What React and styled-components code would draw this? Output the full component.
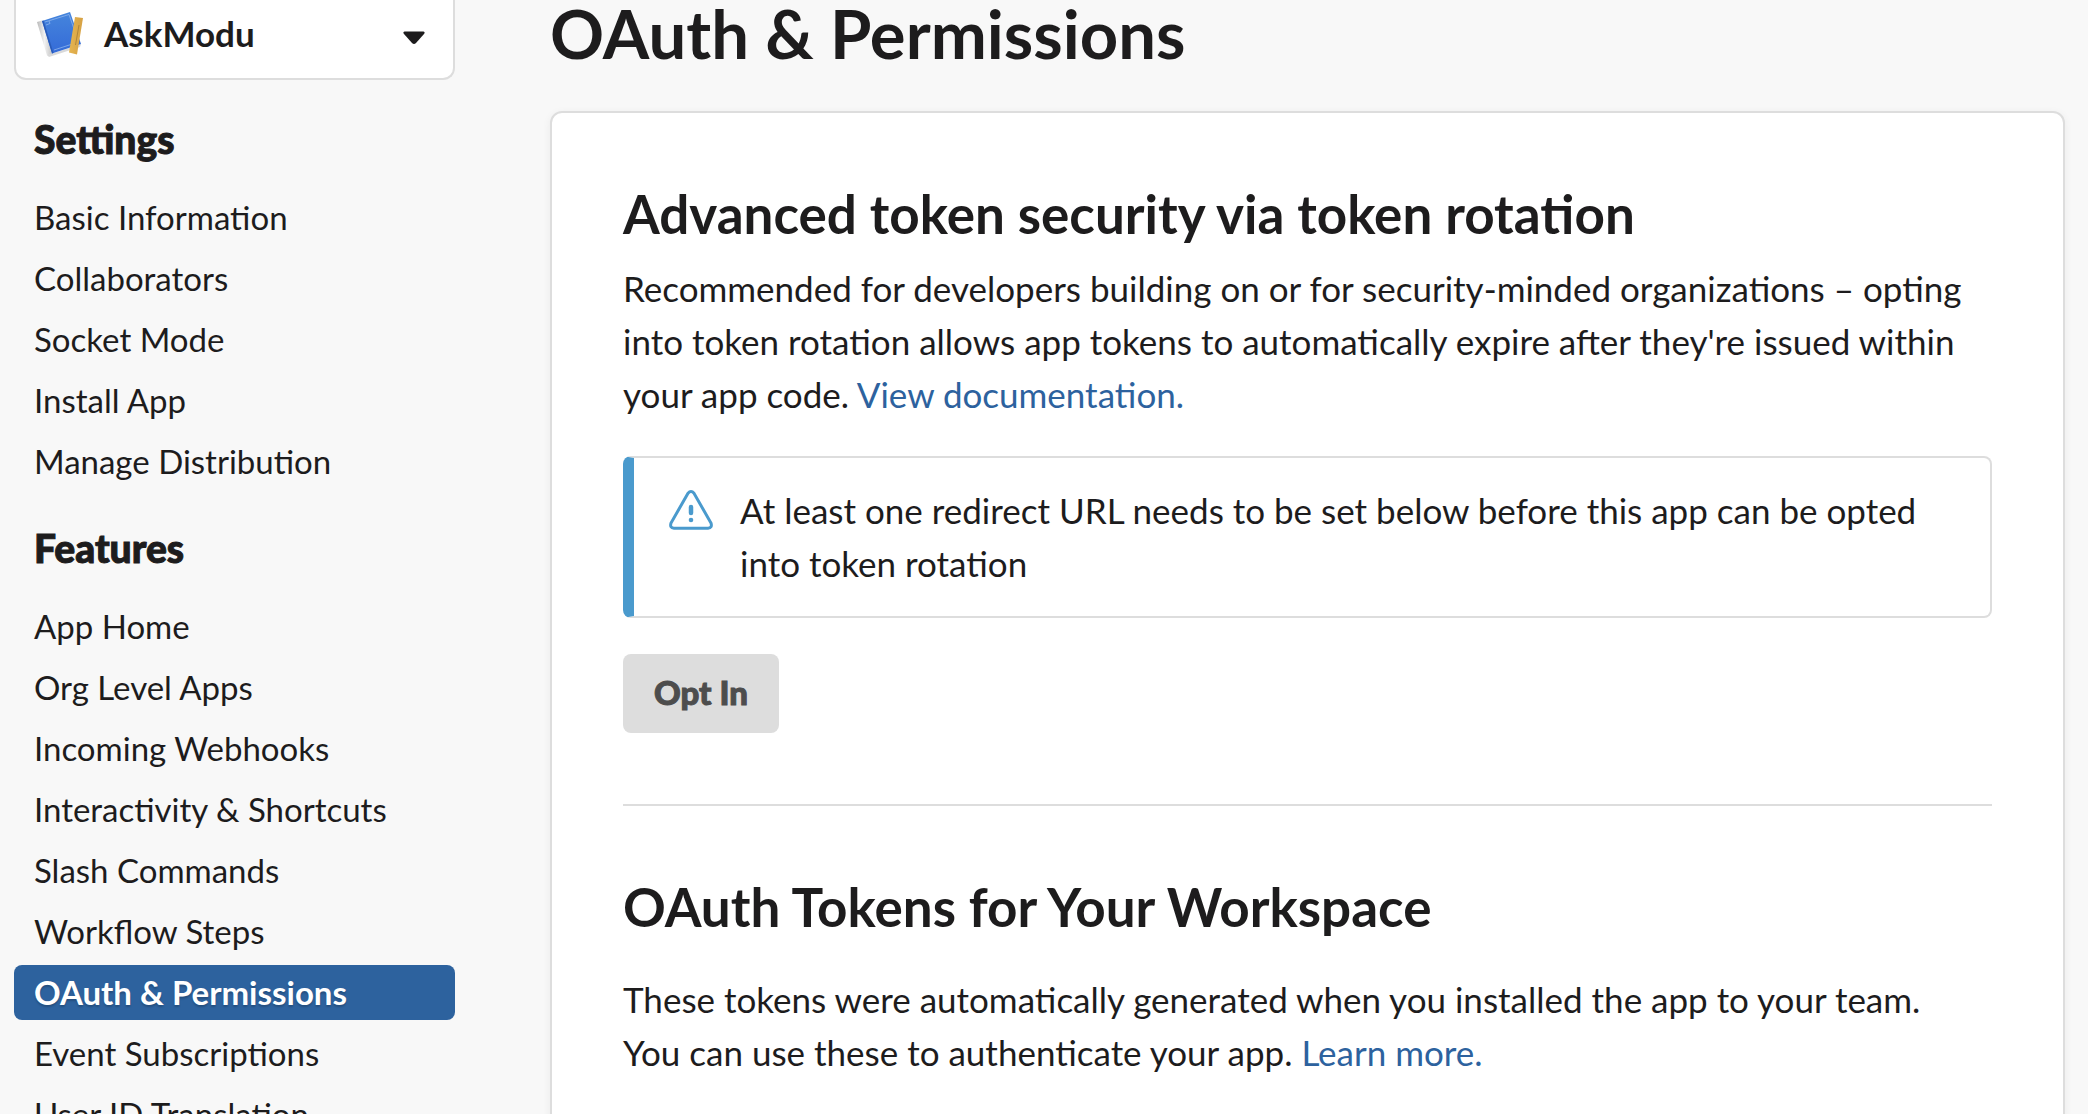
import React from "react";
import styled, { createGlobalStyle } from "styled-components";

const GlobalStyle = createGlobalStyle`
  *, *::before, *::after { box-sizing: border-box; }
  body {
    margin: 0;
    background: #f8f8f8;
    color: #1d1c1d;
    font-family: Lato, "Liberation Sans", sans-serif;
    font-size: 35px;
    line-height: 53px;
  }
`;

const Page = styled.div`
  display: flex;
  gap: 95px;
  height: 100vh;
  padding: 0 23px 0 14px;
  overflow: hidden;
`;

const Sidebar = styled.aside`
  flex: 0 0 441px;
`;

const AppPicker = styled.button`
  display: flex;
  align-items: center;
  gap: 18px;
  width: 100%;
  height: 80px;
  padding: 0 28px 11px 20px;
  border: 2px solid #dddddd;
  border-top: 0;
  border-radius: 0 0 12px 12px;
  background: #ffffff;
  color: inherit;
  font: inherit;
  font-weight: 700;
  text-align: left;
`;

const AppName = styled.span`
  flex: 1;
`;

const CaretIcon = styled.svg`
  flex: none;
  margin-top: 8px;
`;

const NavHeading = styled.h2`
  margin: 0;
  padding: 33px 0 24px 20px;
  font-size: 39px;
  line-height: 53px;
  font-weight: 900;
  -webkit-text-stroke: 1px currentColor;
`;

const NavList = styled.ul`
  display: flex;
  flex-direction: column;
  gap: 6px;
  margin: 0;
  padding: 0;
  list-style: none;
`;

const NavLink = styled.a`
  display: block;
  padding: 0 20px;
  border-radius: 8px;
  font-size: 33px;
  line-height: 55px;
  text-decoration: none;
  white-space: nowrap;
  color: ${(p) => (p.$active ? "#ffffff" : "inherit")};
  background: ${(p) => (p.$active ? "#2d629e" : "transparent")};
  font-weight: ${(p) => (p.$active ? 700 : 400)};
  text-shadow: ${(p) => (p.$active ? "0 2px 2px rgba(0, 0, 0, 0.2)" : "none")};
`;

const Main = styled.main`
  flex: 1;
  min-width: 0;
`;

const Title = styled.h1`
  margin: 0;
  padding: 0 0 45px;
  font-size: 67px;
  line-height: 66px;
  font-weight: 700;
`;

const Card = styled.div`
  min-height: 100vh;
  padding: 71px;
  border: 2px solid #dddddd;
  border-radius: 12px;
  background: #ffffff;
  box-shadow: 0 2px 8px rgba(0, 0, 0, 0.06);
`;

const Section = styled.section`
  & + & {
    margin-top: 71px;
    padding-top: 71px;
    border-top: 2px solid #dddddd;
  }
`;

const SectionTitle = styled.h2`
  margin: 0 0 ${(p) => (p.$spaced ? "36px" : "18px")};
  font-size: 53px;
  line-height: 60px;
  font-weight: 700;
`;

const Text = styled.p`
  margin: 0;
  padding-right: 16px;
`;

const TextLink = styled.a`
  color: #2d629e;
  text-decoration: none;
`;

const Notice = styled.div`
  display: flex;
  gap: 27px;
  margin: 35px 0 36px;
  padding: 26px 40px 26px 35px;
  border: 2px solid #dddddd;
  border-left: 11px solid #4a9acd;
  border-radius: 8px;
`;

const NoticeIcon = styled.svg`
  flex: none;
  margin-top: 6px;
`;

const OptIn = styled.button`
  display: block;
  height: 79px;
  padding: 0 31px 2px;
  border: 0;
  border-radius: 8px;
  background: #dddddd;
  color: #4d4d4d;
  font: inherit;
  font-size: 33px;
  font-weight: 900;
  -webkit-text-stroke: 1px currentColor;
`;

const settings = [
  "Basic Information",
  "Collaborators",
  "Socket Mode",
  "Install App",
  "Manage Distribution",
];

const features = [
  "App Home",
  "Org Level Apps",
  "Incoming Webhooks",
  "Interactivity & Shortcuts",
  "Slash Commands",
  "Workflow Steps",
  "OAuth & Permissions",
  "Event Subscriptions",
  "User ID Translation",
];

function BookIcon() {
  return (
    <svg width="50" height="50" viewBox="0 0 50 50" aria-hidden="true">
      <defs>
        <linearGradient id="cover" x1="0" y1="0" x2="0" y2="1">
          <stop offset="0" stopColor="#4585dc" />
          <stop offset="1" stopColor="#356bd8" />
        </linearGradient>
        <linearGradient id="spine" x1="0" y1="0" x2="1" y2="0">
          <stop offset="0" stopColor="#b8b8b8" />
          <stop offset="0.5" stopColor="#f2f2f2" />
          <stop offset="1" stopColor="#c4c4c4" />
        </linearGradient>
        <linearGradient id="ruler" x1="0" y1="0" x2="1" y2="0">
          <stop offset="0" stopColor="#e6b550" />
          <stop offset="1" stopColor="#d6a144" />
        </linearGradient>
      </defs>
      <path d="M11 46 L15 45 L45 35 L44 38 L13 48 Z" fill="#000000" opacity="0.15" />
      <path d="M1 13 L6 11.500 L16 45 L11 46.500 Z" fill="url(#spine)" />
      <path d="M6 12 L34 3 L45 35 L16 44.500 Z" fill="url(#cover)" />
      <path d="M6 12 L7.500 11.500 L17.500 44 L16 44.500 Z" fill="#2a5bb8" />
      <path
        d="M9 13 L33 5.500 L42.500 33 L18 41 M10 16 L14 14.500 L13 12"
        fill="none"
        stroke="#8db4ee"
        strokeWidth="0.800"
      />
      <path d="M39 8 L47 9 L41 45.500 L33 43.500 Z" fill="url(#ruler)" />
      <path d="M43 16 L39.500 36" stroke="#a67c34" strokeWidth="0.800" />
    </svg>
  );
}

function Caret() {
  return (
    <CaretIcon width="22" height="14" viewBox="0 0 22 14" aria-hidden="true">
      <path
        d="M1.500 0.500 H20.500 Q22.500 1 21 3 L13 12 Q11 14 9 12 L1 3 Q-0.500 1 1.500 0.500 Z"
        fill="#1d1c1d"
      />
    </CaretIcon>
  );
}

function NavGroup({ title, items, active }) {
  return (
    <nav aria-label={title}>
      <NavHeading>{title}</NavHeading>
      <NavList>
        {items.map((item) => (
          <li key={item}>
            <NavLink
              href="#"
              $active={item === active}
              aria-current={item === active ? "page" : undefined}
            >
              {item}
            </NavLink>
          </li>
        ))}
      </NavList>
    </nav>
  );
}

export default function App() {
  return (
    <>
      <GlobalStyle />
      <Page>
        <Sidebar>
          <AppPicker type="button">
            <BookIcon />
            <AppName>AskModu</AppName>
            <Caret />
          </AppPicker>
          <NavGroup title="Settings" items={settings} />
          <NavGroup title="Features" items={features} active="OAuth & Permissions" />
        </Sidebar>
        <Main>
          <Title>OAuth &amp; Permissions</Title>
          <Card>
            <Section>
              <SectionTitle>Advanced token security via token rotation</SectionTitle>
              <Text>
                Recommended for developers building on or for security-minded
                organizations – opting into token rotation allows app tokens to
                automatically expire after they're issued within your app code.{" "}
                <TextLink href="#">View documentation.</TextLink>
              </Text>
              <Notice role="note">
                <NoticeIcon width="44" height="40" viewBox="0 0 44 40" aria-hidden="true">
                  <path
                    d="M19 3.300 L2 33 Q0.500 38 5 38.300 H39 Q43.500 38 42 33 L25 3.300 Q22 -0.300 19 3.300 Z"
                    fill="none"
                    stroke="#4a9acd"
                    strokeWidth="3"
                  />
                  <path d="M22 17 V23" stroke="#4a9acd" strokeWidth="4.500" strokeLinecap="round" />
                  <circle cx="22" cy="30" r="2.300" fill="#4a9acd" />
                </NoticeIcon>
                <Text>
                  At least one redirect URL needs to be set below before this app
                  can be opted into token rotation
                </Text>
              </Notice>
              <OptIn type="button" disabled>
                Opt In
              </OptIn>
            </Section>
            <Section>
              <SectionTitle $spaced>OAuth Tokens for Your Workspace</SectionTitle>
              <Text>
                These tokens were automatically generated when you installed the
                app to your team. You can use these to authenticate your app.{" "}
                <TextLink href="#">Learn more.</TextLink>
              </Text>
            </Section>
          </Card>
        </Main>
      </Page>
    </>
  );
}
